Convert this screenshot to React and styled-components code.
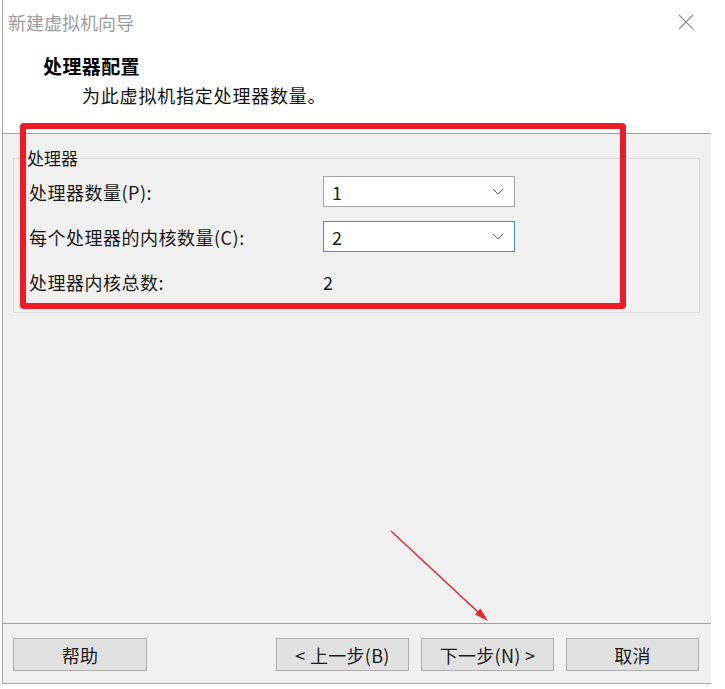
import styled, { createGlobalStyle } from "styled-components";

const GlobalStyle = createGlobalStyle`
  html, body {
    margin: 0;
    padding: 0;
    background: #ffffff;
  }
  body {
    font-family: "Noto Sans CJK SC", "Noto Sans", sans-serif;
    color: #1a1a1a;
  }
`;

const Window = styled.div`
  position: relative;
  box-sizing: border-box;
  margin-left: 2px;
  width: 709px;
  height: 684px;
  border-left: 1px solid #a8a8a8;
  border-bottom: 1px solid #a8a8a8;
  display: flex;
  flex-direction: column;
  background: #ffffff;
`;

const TitleBar = styled.div`
  height: 44px;
  padding: 0 17px 0 5px;
  display: flex;
  align-items: center;
  justify-content: space-between;
`;

const Title = styled.span`
  font-size: 18px;
  line-height: 22px;
  color: #9b9b9b;
`;

const CloseIcon = styled.svg`
  width: 16px;
  height: 16px;
  display: block;
`;

const Header = styled.div`
  box-sizing: border-box;
  height: 90px;
  padding-top: 11px;
  border-bottom: 1px solid #a0a0a0;
`;

const Heading = styled.h1`
  margin: 0;
  padding-left: 40px;
  font-size: 19px;
  font-weight: 700;
  line-height: 22px;
  letter-spacing: 0.4px;
  color: #000000;
`;

const SubTitle = styled.p`
  margin: 7px 0 0;
  padding-left: 79px;
  font-size: 18px;
  line-height: 22px;
  letter-spacing: 0.8px;
  color: #111111;
`;

const Body = styled.div`
  flex: 1;
  background: #f0f0f0;
  padding: 15px 11px 0 10px;
`;

const Group = styled.fieldset`
  margin: 0;
  padding: 9px 0 15px 15px;
  border: 1px solid #dcdcdc;
  display: flex;
  flex-direction: column;
  gap: 14px;
`;

const GroupLabel = styled.legend`
  margin-left: -2px;
  padding: 0;
  font-size: 17px;
  line-height: 18px;
  color: #1a1a1a;
`;

const Row = styled.div`
  height: 31px;
  display: flex;
  align-items: center;
`;

const Label = styled.span`
  width: 294px;
  font-size: 18px;
  line-height: 22px;
  letter-spacing: 0.5px;
  color: #1a1a1a;
`;

const Value = styled.span`
  font-size: 18px;
  line-height: 22px;
  color: #1a1a1a;
`;

const Combo = styled.div`
  box-sizing: border-box;
  width: 192px;
  height: 31px;
  background: #ffffff;
  border: 1px solid ${(p) => (p.$focused ? "#3d8fdc" : "#a6a6a6")};
  display: flex;
  align-items: center;
  justify-content: space-between;
  padding: 0 10px 0 8px;
  font-size: 18px;
  line-height: 22px;
  color: #1a1a1a;
`;

const Chevron = styled.svg`
  width: 12px;
  height: 7px;
  display: block;
`;

const Footer = styled.div`
  box-sizing: border-box;
  height: 60px;
  border-top: 1px solid #a0a0a0;
  background: #f0f0f0;
  padding: 14px 12px 13px 10px;
  display: flex;
  justify-content: space-between;
`;

const ButtonGroup = styled.div`
  display: flex;
  gap: 12px;
`;

const Button = styled.button`
  box-sizing: border-box;
  width: ${(p) => (p.$wide ? "134px" : "133px")};
  height: 33px;
  margin: 0;
  padding: 0;
  background: #e1e1e1;
  border: 1px solid #adadad;
  font-family: "Noto Sans CJK SC", "Noto Sans", sans-serif;
  font-size: 18px;
  line-height: 22px;
  letter-spacing: 0.3px;
  color: #1a1a1a;
`;

const Highlight = styled.div`
  position: absolute;
  left: 17px;
  top: 123px;
  width: 606px;
  height: 186px;
  box-sizing: border-box;
  border: 6px solid #ed1c24;
  border-radius: 4px;
  pointer-events: none;
`;

const Arrow = styled.svg`
  position: absolute;
  left: 385px;
  top: 528px;
  width: 104px;
  height: 96px;
  pointer-events: none;
`;

const ComboBox = ({ value, focused }) => (
  <Combo $focused={focused}>
    <span>{value}</span>
    <Chevron viewBox="0 0 12 7">
      <path d="M1 1 L6 6 L11 1" fill="none" stroke="#666666" strokeWidth="1" />
    </Chevron>
  </Combo>
);

const App = () => {
  return (
    <>
      <GlobalStyle />
      <Window>
        <TitleBar>
          <Title>新建虚拟机向导</Title>
          <CloseIcon viewBox="0 0 16 16">
            <path d="M1 1 L15 15 M15 1 L1 15" stroke="#8c8c8c" strokeWidth="1.1" />
          </CloseIcon>
        </TitleBar>
        <Header>
          <Heading>处理器配置</Heading>
          <SubTitle>为此虚拟机指定处理器数量。</SubTitle>
        </Header>
        <Body>
          <Group>
            <GroupLabel>处理器</GroupLabel>
            <Row>
              <Label>处理器数量(P):</Label>
              <ComboBox value="1" />
            </Row>
            <Row>
              <Label>每个处理器的内核数量(C):</Label>
              <ComboBox value="2" focused />
            </Row>
            <Row>
              <Label>处理器内核总数:</Label>
              <Value>2</Value>
            </Row>
          </Group>
        </Body>
        <Footer>
          <Button $wide>帮助</Button>
          <ButtonGroup>
            <Button>&lt; 上一步(B)</Button>
            <Button>下一步(N) &gt;</Button>
            <Button>取消</Button>
          </ButtonGroup>
        </Footer>
        <Highlight />
        <Arrow viewBox="0 0 104 96">
          <line x1="3" y1="3" x2="90" y2="84" stroke="#e8262b" strokeWidth="1.5" />
          <polygon points="100,93 87,86.4 92.4,80.6" fill="#e8262b" />
        </Arrow>
      </Window>
    </>
  );
};

export default App;
